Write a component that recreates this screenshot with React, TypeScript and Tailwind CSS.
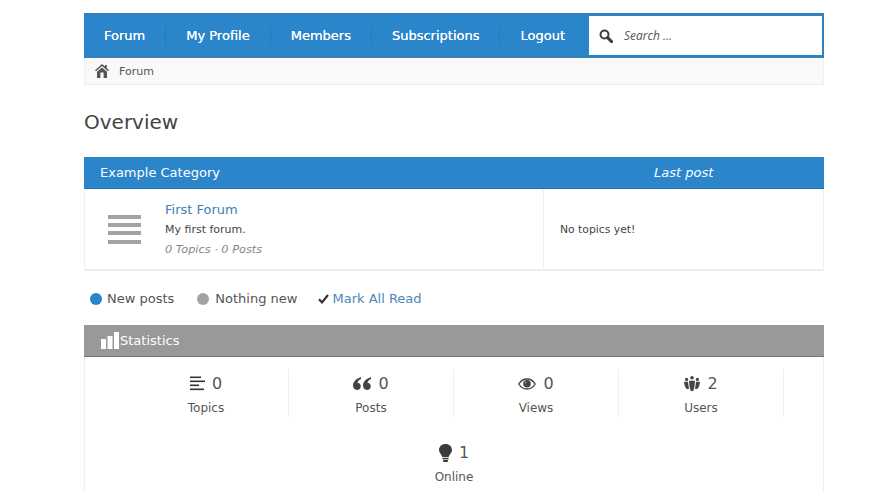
const navItems = ['Forum', 'My Profile', 'Members', 'Subscriptions', 'Logout']

function HomeIcon() {
  return (
    <svg width="14" height="14" viewBox="0 0 14 14" fill="#555">
      <path d="M7 0 L10 2.6 V1 H11.8 V4.2 L14 6.2 L13 7.3 L7 2 L1 7.3 L0 6.2 Z" />
      <path fillRule="evenodd" d="M7 3.4 L12 7.8 V14 H2 V7.8 Z M5.4 8.4 V14 H8.6 V8.4 Z" />
    </svg>
  )
}

function SearchIcon() {
  return (
    <svg width="14" height="14" viewBox="0 0 14 14" fill="none" stroke="#3d3d3d">
      <circle cx="5.5" cy="5.5" r="4" strokeWidth="2" />
      <path d="M8.6 8.6 L12.6 12.6" strokeWidth="3" strokeLinecap="round" />
    </svg>
  )
}

function CheckIcon() {
  return (
    <svg width="11" height="10" viewBox="0 0 11 10" fill="none" stroke="#333" strokeWidth="2.2">
      <path d="M1 5.2 L4 8.4 L10 1" />
    </svg>
  )
}

function TopicsIcon() {
  return (
    <svg width="15" height="15" viewBox="0 0 15 15" fill="#333">
      <rect x="0" y="0.5" width="11" height="1.6" />
      <rect x="0" y="4.5" width="15" height="1.6" />
      <rect x="0" y="8.5" width="9" height="1.6" />
      <rect x="0" y="12.5" width="14" height="1.6" />
    </svg>
  )
}

function QuoteIcon() {
  return (
    <svg width="18" height="13" viewBox="0 0 18 13" fill="#444">
      <path d="M8 0 C3.5 1.5 0 4.5 0 8.6 C0 11.2 1.7 13 4 13 C6.2 13 7.8 11.4 7.8 9.3 C7.8 7.3 6.4 5.8 4.4 5.7 C4.9 4.3 6.3 2.8 8 2 Z" />
      <path d="M18 0 C13.5 1.5 10 4.5 10 8.6 C10 11.2 11.7 13 14 13 C16.2 13 17.8 11.4 17.8 9.3 C17.8 7.3 16.4 5.8 14.4 5.7 C14.9 4.3 16.3 2.8 18 2 Z" />
    </svg>
  )
}

function EyeIcon() {
  return (
    <svg width="18" height="12" viewBox="0 0 18 12">
      <path d="M0.8 6 C3 2.4 6 1 9 1 C12 1 15 2.4 17.2 6 C15 9.6 12 11 9 11 C6 11 3 9.6 0.8 6 Z" fill="none" stroke="#444" strokeWidth="1.3" />
      <circle cx="9" cy="5.7" r="3.8" fill="#444" />
      <circle cx="7.6" cy="4.4" r="1" fill="#999" />
    </svg>
  )
}

function UsersIcon() {
  return (
    <svg width="16" height="15" viewBox="0 0 16 15" fill="#444">
      <circle cx="8" cy="1.8" r="1.8" />
      <circle cx="2.6" cy="3.4" r="1.6" />
      <circle cx="13.4" cy="3.4" r="1.6" />
      <path d="M5 4.8 H11 L10.4 11 L9.2 15 H6.8 L5.6 11 Z" />
      <path d="M0 5.8 H4 L4.6 10.5 L5 13 H2.6 L0.8 10 Z" />
      <path d="M16 5.8 H12 L11.4 10.5 L11 13 H13.4 L15.2 10 Z" />
    </svg>
  )
}

function BulbIcon() {
  return (
    <svg width="13" height="18" viewBox="0 0 13 18" fill="#3a3a3a">
      <path d="M6.5 0 C10.2 0 13 2.6 13 6 C13 8.8 10.4 10.4 9.6 13 H3.4 C2.6 10.4 0 8.8 0 6 C0 2.6 2.8 0 6.5 0 Z" />
      <rect x="3.5" y="13.8" width="6" height="1.6" />
      <rect x="4.2" y="16" width="4.6" height="2" />
    </svg>
  )
}

function BarsIcon() {
  return (
    <svg width="18" height="17" viewBox="0 0 18 17" fill="#fff">
      <rect x="0" y="7" width="5" height="10" />
      <rect x="6.5" y="4" width="5" height="13" />
      <rect x="13" y="0" width="5" height="17" />
    </svg>
  )
}

function ForumIcon() {
  return (
    <svg width="33" height="29" viewBox="0 0 33 29" fill="#a3a3a3">
      <rect x="0" y="0" width="33" height="4" />
      <rect x="0" y="8" width="33" height="4" />
      <rect x="0" y="16" width="33" height="4" />
      <rect x="0" y="25" width="33" height="4" />
    </svg>
  )
}

const stats = [
  { label: 'Topics', value: 0, icon: <TopicsIcon /> },
  { label: 'Posts', value: 0, icon: <QuoteIcon /> },
  { label: 'Views', value: 0, icon: <EyeIcon /> },
  { label: 'Users', value: 2, icon: <UsersIcon /> },
  { label: 'Online', value: 1, icon: <BulbIcon /> },
]

export default function App() {
  return (
    <div className="h-[492px] overflow-hidden bg-white pl-[84px] pt-[13px] font-['DejaVu_Sans',Verdana,sans-serif] text-[#444]">
      <div className="w-[740px]">
        <div className="flex h-[45px] items-center bg-[#2b85cb] border-y-[3px] border-y-[#2f80bd] border-r-[2px] border-r-[#2f80bd]">
          <div className="flex flex-1 items-center">
            {navItems.map((item, i) => (
              <span
                key={item}
                className={`px-5 text-[13px] leading-[18px] text-white [text-shadow:0_0_0.6px_#fff] ${i < navItems.length - 1 ? 'border-r border-[#2678b8]' : ''}`}
              >
                {item}
              </span>
            ))}
          </div>
          <div className="flex h-full w-[233px] items-center bg-white pl-[10px]">
            <SearchIcon />
            <span className="ml-[11px] font-['Open_Sans',sans-serif] text-[12px] italic text-[#555]">Search ...</span>
          </div>
        </div>

        <div className="flex h-[27px] items-center border border-t-0 border-[#eeeeee] bg-[#f9f9f9] pl-[10px] text-[11px] text-[#555]">
          <HomeIcon />
          <span className="ml-[10px] mt-[2px]">Forum</span>
        </div>

        <h1 className="mt-[24px] text-[20px] leading-[26px] text-[#444]">Overview</h1>

        <div className="mt-[22px] flex h-[32px] items-center border-b border-[#2674b0] bg-[#2b85cb] text-[13px] text-white">
          <span className="w-[458px] pl-[16px]">Example Category</span>
          <span className="flex-1 pl-[112px] font-medium italic">Last post</span>
        </div>
        <div className="flex h-[82px] border-x border-b-2 border-[#eeeeee]">
          <div className="flex w-[458px] items-center pt-[2px]">
            <div className="ml-[23px] w-[57px] -mt-[2px]"><ForumIcon /></div>
            <div>
              <div className="text-[13px] leading-[20px] text-[#3b80b8]">First Forum</div>
              <div className="text-[11px] leading-[20px] text-[#444]">My first forum.</div>
              <div className="text-[11.3px] italic leading-[20px] text-[#888]">0 Topics · 0 Posts</div>
            </div>
          </div>
          <div className="flex flex-1 items-center border-l border-[#eeeeee] pl-4 pt-[2px] text-[10.8px] text-[#444]">No topics yet!</div>
        </div>

        <div className="mt-[19px] flex h-[18px] items-center pl-[6px] text-[13px] text-[#555]">
          <span className="h-3 w-3 rounded-full bg-[#2b85cb]" />
          <span className="ml-[5px]">New posts</span>
          <span className="ml-[23px] h-3 w-3 rounded-full bg-[#a3a3a3]" />
          <span className="ml-[6px]">Nothing new</span>
          <span className="ml-[21px]"><CheckIcon /></span>
          <span className="ml-[3px] text-[#4a88bb]">Mark All Read</span>
        </div>

        <div className="mt-[17px] flex h-[32px] items-center gap-[1px] border-b border-[#777] bg-[#999] pl-[17px] text-[13px] text-white">
          <BarsIcon />
          <span>Statistics</span>
        </div>
        <div className="flex h-[200px] flex-wrap content-start justify-center border-x border-[#eeeeee] pt-[12px]">
          {stats.map((s, i) => (
            <div
              key={s.label}
              className={`flex h-[48px] w-[165px] flex-col items-center ${i === 4 ? 'mt-[21px]' : 'border-r border-[#eeeeee]'}`}
            >
              <div className="flex h-[29px] items-center gap-[7px] text-[16px] text-[#555]">
                {s.icon}
                <span>{s.value}</span>
              </div>
              <div className="mt-[1px] text-[12px] leading-[18px] text-[#555]">{s.label}</div>
            </div>
          ))}
        </div>
      </div>
    </div>
  )
}
